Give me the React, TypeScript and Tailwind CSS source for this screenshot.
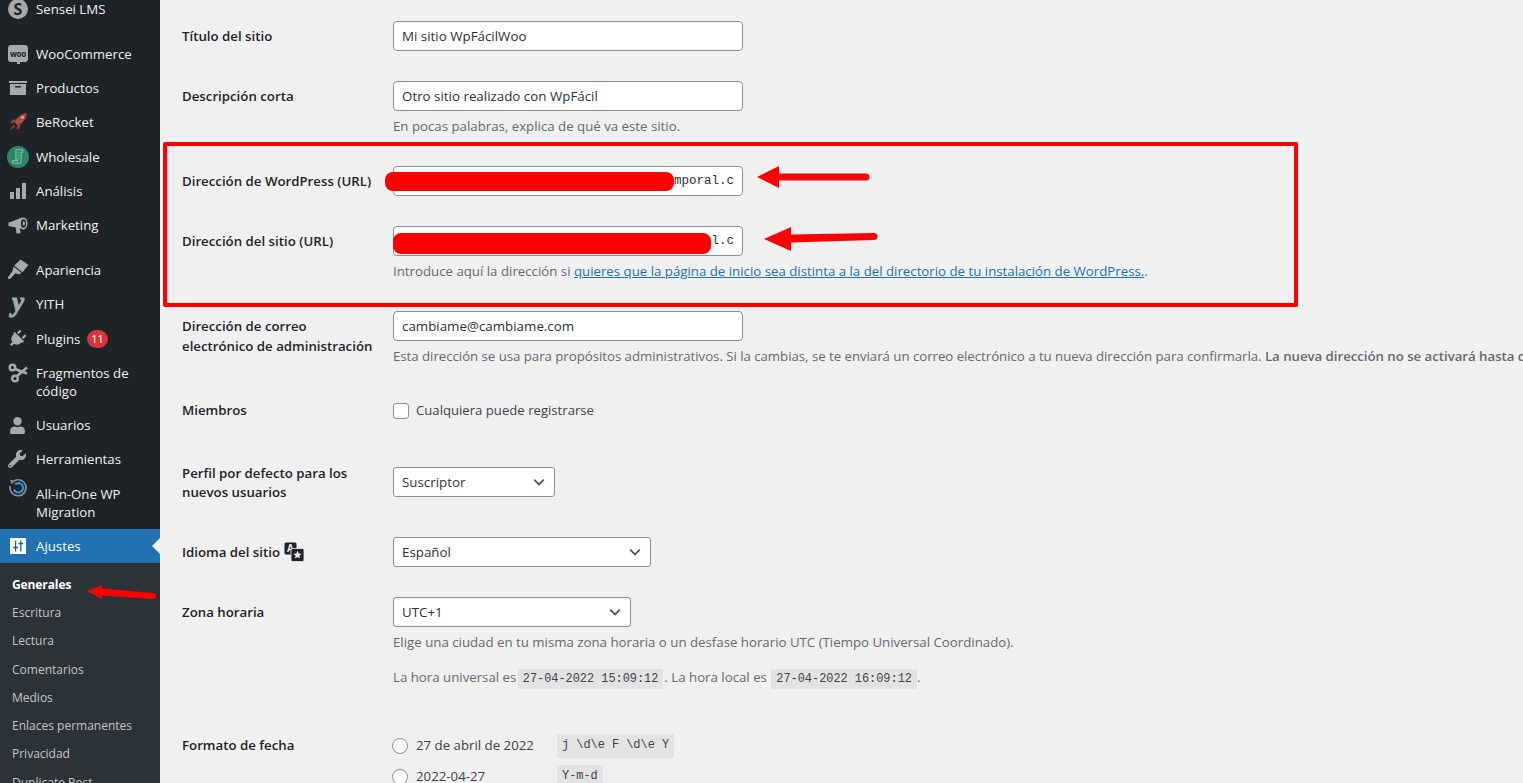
import React from 'react';
import { FaPlug, FaUser, FaWrench } from 'react-icons/fa';

const font = 'font-["Open_Sans","Liberation_Sans",sans-serif]';
const mono = 'font-["Liberation_Mono",monospace]';

function SenseiIcon() {
    return (
        <div className="w-[20px] h-[20px] rounded-full bg-[#a7aaad] flex items-center justify-center text-[#1d2327] font-bold text-[16px] leading-none">S</div>
    );
}

function WooIcon() {
    return (
        <div className="relative w-[20px] h-[17px] rounded-[3px] bg-[#a7aaad] flex items-center justify-center text-[#1d2327] font-bold text-[8px] tracking-[-0.3px] leading-none">
            woo
            <span className="absolute -bottom-[2px] left-[9px] w-[3px] h-[3px] bg-[#a7aaad]"></span>
        </div>
    );
}

function BoxIcon() {
    return (
        <svg viewBox="0 0 20 20" className="w-[20px] h-[20px]" fill="#a7aaad">
            <path d="M1 3h18v2H1z" />
            <path d="M2 6h16v11H2zM7 8v1.500h6V8z" fillRule="evenodd" />
        </svg>
    );
}

function RocketIcon() {
    return (
        <svg viewBox="0 0 20 20" className="w-[20px] h-[20px]">
            <path fill="#b0483d" d="M18.500 1c-4.500.5-7.500 2.500-10 6L6.300 10 10 13.700l3-2.200C16.500 9 18.500 6 18.500 1z" />
            <path fill="#8f3a32" d="M7.500 7L3.500 8.500 2 11.500l4.500-.5zM13 12.500L11.500 16.500l-3 1.500.5-4.500zM5.500 12.500l2 2L1.500 19z" />
            <path fill="#d8b7b2" d="M14.500 4a1.400 1.400 0 1 0 .1 0z" />
        </svg>
    );
}

function WholesaleIcon() {
    return (
        <div className="w-[22px] h-[22px] rounded-full bg-[#2a8a66] flex items-center justify-center -ml-[1px]">
            <svg viewBox="0 0 20 20" className="w-[17px] h-[17px]" fill="none" stroke="#8fc4b0" strokeWidth="1.200">
                <path d="M7 2h8v3h-2v11a2 2 0 0 1-2 2H4a2 2 0 0 1-1-3h6v-1H7z" />
                <path d="M9 6h2M9 9h2M9 12h2" />
            </svg>
        </div>
    );
}

function BarsIcon() {
    return (
        <svg viewBox="0 0 20 20" className="w-[20px] h-[20px]" fill="#a7aaad">
            <path d="M2 11h4v7H2zM8 7h4v11H8zM14 2h4v16h-4z" />
        </svg>
    );
}

function MegaphoneIcon() {
    return (
        <svg viewBox="0 0 20 20" className="w-[20px] h-[20px]">
            <path fill="#a7aaad" d="M0.500 7.500l2-.5L14 2.500l2 12-4.300-1.200.8 3.700c.1.900-.5 1.500-1.300 1.500H9.500c-.6 0-1-.4-1.100-1L7.500 12.200 2.500 11.500l-2-.5z" />
            <ellipse cx="15.500" cy="8.500" rx="4" ry="6" fill="#a7aaad" />
            <ellipse cx="15.500" cy="8.500" rx="2.500" ry="4.300" fill="#1d2327" />
            <ellipse cx="15.800" cy="8.500" rx="1.100" ry="2.200" fill="#a7aaad" />
        </svg>
    );
}

function BrushIcon() {
    return (
        <svg viewBox="0 0 20 20" className="w-[22px] h-[22px] -ml-[1px]">
            <path fill="#a7aaad" d="M12.500 0.500l7 5-5.500 6.500-7.500-6z" />
            <path fill="#a7aaad" d="M6 6.800l7 5.800-2 1.500-3.300-1.100L3 18c-1.200.9-2.800-.6-1.800-1.900L5 11z" />
        </svg>
    );
}

function ScissorsIcon() {
    return (
        <svg viewBox="0 0 20 20" className="w-[20px] h-[20px]" fill="none" stroke="#a7aaad">
            <circle cx="4.500" cy="4.500" r="2.800" strokeWidth="2.400" />
            <circle cx="7" cy="15.500" r="2.800" strokeWidth="2.400" />
            <path d="M7 6l12 4.500M9 13L19 4.500" strokeWidth="2.600" />
        </svg>
    );
}

function YithIcon() {
    return <span className="w-[20px] text-center text-[#a7aaad] font-['Liberation_Serif',serif] italic font-bold text-[27px] leading-[20px] -mt-[5px] [-webkit-text-stroke:1px_#a7aaad]">y</span>;
}

function MigrationIcon() {
    return (
        <svg viewBox="0 0 20 20" className="w-[20px] h-[20px] -mt-[32px]" fill="none">
            <path d="M5 3.500A8 8 0 1 1 2.200 8" stroke="#8c8f94" strokeWidth="1.600" />
            <path d="M2 2l5 .4L3.800 6.200z" fill="#8c8f94" />
            <path d="M7 6.500a4.700 4.700 0 1 1-1 5" stroke="#1f9ce0" strokeWidth="2.200" />
        </svg>
    );
}

function SettingsIcon() {
    return (
        <svg viewBox="0 0 20 20" className="w-[16px] h-[16px] ml-[2px]">
            <rect width="20" height="20" fill="#fff" />
            <path stroke="#1d5f94" strokeWidth="1.600" fill="none" d="M7 3v14M13.500 3v14" />
            <path fill="#1d5f94" d="M4 11h6v1.800H4zM10.500 6h6v1.800h-6z" />
        </svg>
    );
}

function TranslateIcon() {
    return (
        <svg viewBox="0 0 20 20" className="w-[20px] h-[20px]">
            <rect x="0.500" y="0.500" width="12" height="12" rx="1.500" fill="#1d2327" />
            <text x="2.800" y="10" fontSize="10" fontWeight="700" fill="#f0f0f1" fontFamily="Liberation Sans, sans-serif">A</text>
            <rect x="7" y="6.500" width="13" height="13" rx="1.500" fill="#1d2327" stroke="#f0f0f1" strokeWidth="0.800" />
            <path fill="#f0f0f1" d="M13.500 8.800l1.200 2.700 2.900.3-2.200 1.900.7 2.800-2.600-1.500-2.600 1.500.7-2.800-2.200-1.900 2.900-.3z" />
        </svg>
    );
}

type Item = { label: string; icon: React.ReactNode; lines?: number; badge?: string; gap?: boolean; textCls?: string };

const items: Item[] = [
    { label: 'Sensei LMS', icon: <SenseiIcon /> },
    { label: 'WooCommerce', icon: <WooIcon />, gap: true },
    { label: 'Productos', icon: <BoxIcon /> },
    { label: 'BeRocket', icon: <RocketIcon /> },
    { label: 'Wholesale', icon: <WholesaleIcon /> },
    { label: 'Análisis', icon: <BarsIcon /> },
    { label: 'Marketing', icon: <MegaphoneIcon /> },
    { label: 'Apariencia', icon: <BrushIcon />, gap: true },
    { label: 'YITH', icon: <YithIcon />, textCls: '-translate-y-[1px]' },
    { label: 'Plugins', icon: <FaPlug className="w-[18px] h-[18px] text-[#a7aaad] rotate-45" />, badge: '11' },
    { label: 'Fragmentos de código', icon: <div className="-mt-[18px]"><ScissorsIcon /></div>, lines: 2 },
    { label: 'Usuarios', icon: <FaUser className="w-[17px] h-[17px] text-[#a7aaad] ml-[1px]" /> },
    { label: 'Herramientas', icon: <FaWrench className="w-[18px] h-[18px] text-[#a7aaad]" /> },
    { label: 'All-in-One WP Migration', icon: <MigrationIcon />, lines: 3, textCls: '-translate-y-[1px]' },
];

const subItems = ['Generales', 'Escritura', 'Lectura', 'Comentarios', 'Medios', 'Enlaces permanentes', 'Privacidad', 'Duplicate Post'];

function Sidebar() {
    return (
        <aside className="w-[160px] shrink-0 bg-[#1d2327] h-[783px] overflow-hidden text-[13.250px] leading-[18px] text-[#f0f0f1]">
            <div className="-mt-[8.400px]">
                {items.map((item) => (
                    <div key={item.label} className={`flex items-center ${item.gap ? 'mt-[11px]' : ''} ${item.lines === 2 ? 'h-[52px]' : item.lines === 3 ? 'h-[52.500px] pt-[2px]' : 'h-[34.250px]'}`}>
                        <div className="w-[36px] pl-[8px] flex items-center shrink-0">{item.icon}</div>
                        <span className={`w-[120px] ${item.textCls ?? ''}`}>{item.label}</span>
                        {item.badge && (
                            <span className="absolute left-[87px] w-[21px] h-[18px] rounded-full bg-[#d63638] text-white text-[11px] flex items-center justify-center">{item.badge}</span>
                        )}
                    </div>
                ))}
                <div className="relative flex items-center h-[34px] bg-[#2271b1] text-white">
                    <div className="w-[36px] pl-[8px] flex items-center shrink-0">
                        <SettingsIcon />
                    </div>
                    <span>Ajustes</span>
                    <span className="absolute right-0 top-[9px] w-0 h-0 border-y-[8px] border-y-transparent border-r-[8px] border-r-[#f0f0f1]"></span>
                </div>
                <div className="bg-[#2c3338] pt-[7.700px] text-[12px] text-[#c3c4c7]">
                    {subItems.map((s, i) => (
                        <div key={s} className={`pl-[12px] h-[28.250px] flex items-center ${i === 0 ? 'font-bold text-white tracking-[-0.1px]' : ''}`}>{s}</div>
                    ))}
                </div>
            </div>
        </aside>
    );
}

function TextField({ value, right }: { value: string; right?: boolean }) {
    return (
        <div className={`w-[350px] h-[30px] rounded-[4px] border border-[#8c8f94] bg-white px-[8px] flex items-center text-[#2c3338] overflow-hidden ${right ? `justify-end ${mono} text-[12.500px]` : 'pt-[1px] text-[13.350px]'}`}>
            {value}
        </div>
    );
}

function SelectField({ value, width }: { value: string; width: string }) {
    return (
        <div className={`${width} h-[30px] rounded-[3px] border border-[#8c8f94] bg-white pl-[8px] pr-[7px] flex items-center justify-between text-[#2c3338] text-[13.350px]`}>
            <span className="pt-[1px]">{value}</span>
            <svg viewBox="0 0 20 20" className="w-[16px] h-[16px]" fill="none" stroke="#50575e" strokeWidth="2.200">
                <path d="M4 7l6 6 6-6" />
            </svg>
        </div>
    );
}

function Row({ label, top, labelCls = 'pt-[5px] leading-[20px]', children }: { label: React.ReactNode; top: string; labelCls?: string; children: React.ReactNode }) {
    return (
        <div className={`flex ${top}`}>
            <div className={`w-[211px] shrink-0 pr-[18px] font-semibold text-[#1d2327] ${labelCls}`}>{label}</div>
            <div className="min-w-0 flex-1">{children}</div>
        </div>
    );
}

function Help({ children, top = 'mt-[5px]', extra = '' }: { children: React.ReactNode; top?: string; extra?: string }) {
    return <p className={`${top} ${extra} text-[#646970] leading-[20px] whitespace-nowrap`}>{children}</p>;
}

function Code({ children, extra = '' }: { children: React.ReactNode; extra?: string }) {
    return <code className={`${mono} ${extra} bg-[#e3e3e4] text-[#3c434a] text-[11.900px] px-[5px] py-[3px]`}>{children}</code>;
}

function Annotations() {
    return (
        <>
            <div className="absolute left-[163px] top-[142px] w-[1135px] h-[165px] border-[4px] border-[#ff0000] rounded-[2px]"></div>
            <svg className="absolute left-0 top-0 w-[1523px] h-[783px] pointer-events-none" viewBox="0 0 1523 783" fill="#ff0000" stroke="none">
                <rect x="385" y="172" width="289" height="19" rx="8" />
                <rect x="393" y="233" width="318" height="21" rx="8" />
                <path d="M757 177l22-11v7.500h87a3.500 3.500 0 0 1 0 7h-87V188z" />
                <path d="M764 239l27-12v7.500l83-1.500a3.500 3.500 0 0 1 0 7l-83 2.500V251z" />
                <path d="M87 591l15-6v3.500l51 4.500a2.800 2.800 0 0 1 0 6l-51-3.500V599z" />
            </svg>
        </>
    );
}

export default function App() {
    return (
        <div className={`relative flex w-[1523px] h-[783px] overflow-hidden bg-[#f0f0f1] ${font} text-[13.250px]`}>
            <Sidebar />
            <main className="flex-1 min-w-0 pl-[22px] pt-[21px] overflow-hidden text-[#3c434a]">
                <Row label="Título del sitio" top="">
                    <TextField value="Mi sitio WpFácilWoo" />
                </Row>
                <Row label="Descripción corta" top="mt-[30px]">
                    <TextField value="Otro sitio realizado con WpFácil" />
                    <Help>En pocas palabras, explica de qué va este sitio.</Help>
                </Row>
                <Row label="Dirección de WordPress (URL)" top="mt-[30px]">
                    <TextField value="mporal.c" right />
                </Row>
                <Row label="Dirección del sitio (URL)" top="mt-[30px]">
                    <TextField value="l.c" right />
                    <Help>
                        Introduce aquí la dirección si <a className="text-[#2271b1] underline">quieres que la página de inicio sea distinta a la del directorio de tu instalación de WordPress.</a>.
                    </Help>
                </Row>
                <Row label="Dirección de correo electrónico de administración" top="mt-[30px]">
                    <TextField value="cambiame@cambiame.com" />
                    <Help extra="tracking-[-0.035px]">
                        Esta dirección se usa para propósitos administrativos. Si la cambias, se te enviará un correo electrónico a tu nueva dirección para confirmarla. <strong className="font-semibold">La nueva dirección no se activará hasta que la confirmes.</strong>
                    </Help>
                </Row>
                <Row label="Miembros" top="mt-[30px]" labelCls="pt-[4px] leading-[20px]">
                    <label className="flex items-center gap-[7px] h-[30px] text-[13.150px]">
                        <span className="w-[16px] h-[16px] rounded-[3px] border border-[#8c8f94] bg-white"></span>
                        Cualquiera puede registrarse
                    </label>
                </Row>
                <Row label="Perfil por defecto para los nuevos usuarios" top="mt-[41px]" labelCls="-mt-[3px] leading-[19px]">
                    <SelectField value="Suscriptor" width="w-[162px]" />
                </Row>
                <Row
                    label={
                        <span className="flex items-center gap-[4px]">
                            Idioma del sitio <TranslateIcon />
                        </span>
                    }
                    top="mt-[35px]"
                >
                    <SelectField value="Español" width="w-[258px]" />
                </Row>
                <Row label="Zona horaria" top="mt-[30px]">
                    <SelectField value="UTC+1" width="w-[238px]" />
                    <Help>Elige una ciudad en tu misma zona horaria o un desfase horario UTC (Tiempo Universal Coordinado).</Help>
                    <Help top="mt-[15px]">
                        La hora universal es <Code extra="-ml-[2px] mr-[1px]">27-04-2022 15:09:12</Code>. La hora local es <Code extra="ml-[1px]">27-04-2022 16:09:12</Code>.
                    </Help>
                </Row>
                <Row label="Formato de fecha" top="mt-[41px]">
                    <div className="flex items-center h-[32px]">
                        <span className="w-[16px] h-[16px] -ml-[1px] rounded-full border border-[#8c8f94] bg-white mr-[8px]"></span>
                        <span className="w-[141px]">27 de abril de 2022</span>
                        <Code>j \d\e F \d\e Y</Code>
                    </div>
                    <div className="flex items-center h-[30px]">
                        <span className="w-[16px] h-[16px] -ml-[1px] rounded-full border border-[#8c8f94] bg-white mr-[8px]"></span>
                        <span className="w-[141px]">2022-04-27</span>
                        <Code>Y-m-d</Code>
                    </div>
                </Row>
            </main>
            <Annotations />
        </div>
    );
}
